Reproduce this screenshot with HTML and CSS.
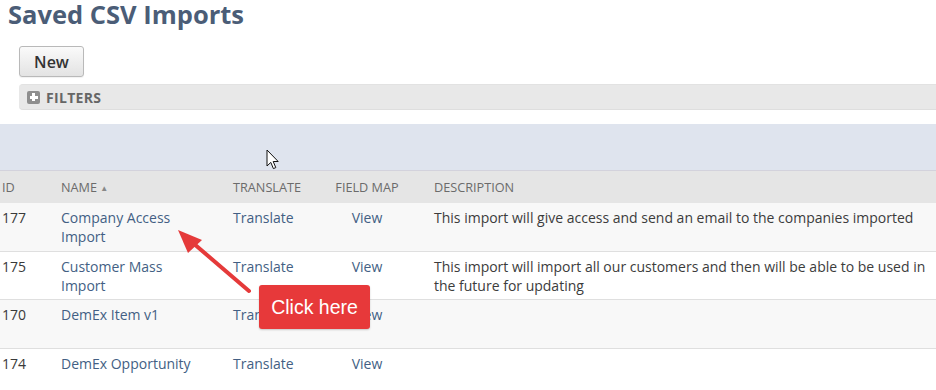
FILE: index.html
```html
<!DOCTYPE html>
<html lang="en">
<head>
<meta charset="utf-8">
<title>Saved CSV Imports</title>
<link rel="stylesheet" href="styles.css">
</head>
<body>
<div class="page">
  <h1 class="title">Saved CSV Imports</h1>
  <div class="controls">
    <button class="btn" type="button">New</button>
    <div class="filters">
      <span class="plus-icon"></span>
      <span class="filters-label">FILTERS</span>
    </div>
  </div>
  <div class="band"></div>
  <table class="grid">
    <colgroup>
      <col class="c-id"><col class="c-name"><col class="c-tr"><col class="c-map"><col class="c-desc">
    </colgroup>
    <thead>
      <tr>
        <th>ID</th>
        <th>NAME <span class="sort">&#9650;</span></th>
        <th>TRANSLATE</th>
        <th class="center">FIELD MAP</th>
        <th class="desc">DESCRIPTION</th>
      </tr>
    </thead>
    <tbody>
      <tr class="odd">
        <td>177</td>
        <td class="name"><a href="#">Company Access Import</a></td>
        <td><a href="#">Translate</a></td>
        <td class="center"><a href="#">View</a></td>
        <td class="desc">This import will give access and send an email to the companies imported</td>
      </tr>
      <tr>
        <td>175</td>
        <td class="name"><a href="#">Customer Mass Import</a></td>
        <td><a href="#">Translate</a></td>
        <td class="center"><a href="#">View</a></td>
        <td class="desc">This import will import all our customers and then will be able to be used in the future for updating</td>
      </tr>
      <tr class="odd">
        <td>170</td>
        <td class="name"><a href="#">DemEx Item v1</a></td>
        <td><a href="#">Translate</a></td>
        <td class="center"><a href="#">View</a></td>
        <td class="desc"></td>
      </tr>
      <tr>
        <td>174</td>
        <td class="name"><a href="#">DemEx Opportunity</a></td>
        <td><a href="#">Translate</a></td>
        <td class="center"><a href="#">View</a></td>
        <td class="desc"></td>
      </tr>
    </tbody>
  </table>

  <svg class="arrow" width="936" height="390" viewBox="0 0 936 390" aria-hidden="true">
    <line x1="193" y1="243" x2="249" y2="291" stroke="#e53a3a" stroke-width="4" stroke-linecap="round"/>
    <polygon points="178,230 202,240 188,253" fill="#e53a3a"/>
  </svg>
  <div class="callout">Click here</div>
  <svg class="cursor" width="14" height="22" viewBox="0 0 14 22" aria-hidden="true">
    <path d="M1 1 L1 17 L4.8 13.4 L7.4 19.6 L9.8 18.6 L7.2 12.5 L12.2 12.5 Z" fill="#fff" stroke="#111" stroke-width="1" stroke-linejoin="round"/>
  </svg>
</div>
</body>
</html>
```

FILE: styles.css
```css
* { box-sizing: border-box; }
html, body { margin: 0; padding: 0; background: #fff; }
body {
  font-family: "Open Sans", "Liberation Sans", Arial, sans-serif;
  color: #333;
  width: 936px;
  height: 390px;
  overflow: hidden;
}
.page { position: relative; width: 936px; height: 390px; }

.title {
  margin: 0;
  padding-left: 8px;
  font-size: 25.5px;
  line-height: 28px;
  font-weight: 700;
  color: #4b5d77;
}

.controls {
  padding-left: 19px;
  margin-top: 18px;
  display: flex;
  flex-direction: column;
  align-items: flex-start;
  gap: 7px;
}

.btn {
  width: 65px;
  height: 31px;
  border: 1px solid #b9b9b9;
  border-radius: 3px;
  background: linear-gradient(#fafafa, #e3e3e3);
  font-family: "Open Sans", "Liberation Sans", Arial, sans-serif;
  font-size: 16px;
  font-weight: 600;
  color: #333;
  padding: 0;
  box-shadow: 0 1px 1px rgba(0,0,0,0.06);
}

.filters {
  align-self: stretch;
  height: 26px;
  background: #e8e8e8;
  border-top: 1px solid #e2e2e2;
  border-bottom: 1px solid #dedede;
  border-radius: 4px 0 0 4px;
  display: flex;
  align-items: center;
  padding-left: 8px;
  gap: 6px;
}
.plus-icon {
  width: 13px;
  height: 13px;
  border-radius: 2px;
  background: #8e8e8e;
  position: relative;
}
.plus-icon::before, .plus-icon::after {
  content: "";
  position: absolute;
  background: #fff;
}
.plus-icon::before { left: 2.5px; right: 2.5px; top: 5px; height: 3px; }
.plus-icon::after { top: 2.5px; bottom: 2.5px; left: 5px; width: 3px; }
.filters-label {
  font-size: 14px;
  font-weight: 700;
  color: #666;
  letter-spacing: 0.3px;
}

.band {
  margin-top: 14px;
  height: 46px;
  background: #dfe4ee;
}

.grid {
  width: 936px;
  border-collapse: collapse;
  table-layout: fixed;
  font-size: 14px;
}
.c-id { width: 59px; }
.c-name { width: 172px; }
.c-tr { width: 95px; }
.c-map { width: 82px; }
.c-desc { width: 528px; }

.grid thead tr {
  background: #e5e5e5;
  border-top: 1px solid #d3d2dc;
}
.grid th {
  height: 32px;
  padding: 0 0 0 2px;
  text-align: left;
  font-weight: 400;
  font-size: 12.7px;
  color: #6b6b6b;
  vertical-align: middle;
}
.sort { font-size: 8px; color: #888; position: relative; top: -1px; }

.grid tbody tr { height: 48.7px; border-bottom: 1px solid #dfdfdf; }
.grid tbody tr:last-child { border-bottom: none; }
.grid tbody tr.odd { background: #f8f8f8; }
.grid td {
  vertical-align: top;
  padding: 5px 0 0 2px;
  line-height: 19px;
  color: #3a3a3a;
}
.grid td.name { padding-right: 30px; }
.grid a { color: #435f84; text-decoration: none; }
.grid .center { text-align: center; padding-left: 0; }
.grid .desc { padding-left: 26px; padding-right: 6px; }
.grid td.desc { color: #3c3c3c; }

.arrow { position: absolute; left: 0; top: 0; pointer-events: none; }
.callout {
  position: absolute;
  left: 259px;
  top: 285px;
  width: 111px;
  height: 44px;
  background: #e7393a;
  border-radius: 3px;
  color: #fff;
  font-family: "Liberation Sans", Arial, sans-serif;
  font-size: 19.5px;
  display: flex;
  align-items: center;
  justify-content: center;
  box-shadow: 0 1px 2px rgba(0,0,0,0.2);
}
.cursor { position: absolute; left: 266px; top: 149px; }
```
